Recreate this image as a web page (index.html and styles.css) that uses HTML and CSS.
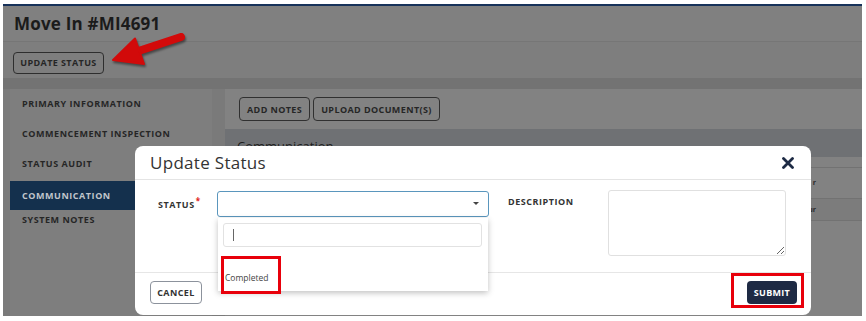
FILE: index.html
```html
<!DOCTYPE html>
<html lang="en">
<head>
    <meta charset="UTF-8">
    <meta name="viewport" content="width=device-width, initial-scale=1.0">
    <title>Move In #MI4691</title>
    <link rel="stylesheet" href="styles.css">
</head>
<body>
    <div class="top-strip"></div>

    <div class="screen">
        <header class="page-header">
            <h1>Move In #MI4691</h1>
        </header>
        <div class="toolbar">
            <button class="btn-outline">UPDATE STATUS</button>
        </div>
        <div class="sub-band"></div>

        <div class="content">
            <nav class="sidebar">
                <a class="nav-item">PRIMARY INFORMATION</a>
                <a class="nav-item">COMMENCEMENT INSPECTION</a>
                <a class="nav-item">STATUS AUDIT</a>
                <a class="nav-item active">COMMUNICATION</a>
                <a class="nav-item last">SYSTEM NOTES</a>
            </nav>

            <section class="panel">
                <div class="panel-actions">
                    <button class="btn-outline">ADD NOTES</button>
                    <button class="btn-outline">UPLOAD DOCUMENT(S)</button>
                </div>
                <div class="panel-title">Communication</div>
                <div class="rows">
                    <div class="row">r</div>
                    <div class="row alt">ur</div>
                </div>
            </section>
        </div>

        <!-- modal -->
        <div class="modal">
            <div class="modal-header">
                <h2>Update Status</h2>
                <span class="close">
                    <svg width="12" height="12" viewBox="0 0 12 12">
                        <path d="M1.5 1.5 L10.5 10.5 M10.5 1.5 L1.5 10.5" stroke="#1d2a44" stroke-width="2.8" stroke-linecap="round"/>
                    </svg>
                </span>
            </div>
            <div class="modal-body">
                <label class="field-label status-label">STATUS<sup>*</sup></label>
                <div class="select-wrap">
                    <div class="select"><span class="caret"></span></div>
                    <div class="dropdown">
                        <div class="search"><span class="cursor"></span></div>
                        <ul class="options">
                            <li class="option empty"></li>
                            <li class="option">Completed</li>
                        </ul>
                    </div>
                </div>
                <label class="field-label desc-label">DESCRIPTION</label>
                <textarea class="description"></textarea>
            </div>
            <div class="modal-footer">
                <button class="btn-outline btn-cancel">CANCEL</button>
                <button class="btn-submit">SUBMIT</button>
            </div>
        </div>

        <!-- annotations -->
        <svg class="arrow" width="200" height="80" viewBox="3 6 200 80">
            <line x1="137" y1="51.5" x2="181" y2="37" stroke="#d20a0a" stroke-width="8" stroke-linecap="round"/>
            <polygon points="113,60 135,38.5 144,64" fill="#d20a0a" stroke="#d20a0a" stroke-width="2" stroke-linejoin="round"/>
        </svg>
        <div class="mark mark-option"></div>
        <div class="mark mark-submit"></div>
    </div>
</body>
</html>
```

FILE: styles.css
```css
body {
    margin: 0;
    background-color: #ffffff;
    font-family: 'Open Sans', 'Liberation Sans', sans-serif;
}

.top-strip {
    height: 4px;
}

.screen {
    position: relative;
    margin-left: 3px;
    width: 859px;
    height: 310px;
    border-top: 2px solid #17325a;
    background-color: #7a7a7a;
    overflow: hidden;
}

.page-header {
    height: 35px;
    padding-left: 11px;
    background-color: #808080;
    border-bottom: 1px solid #767676;
}

.page-header h1 {
    margin: 0;
    font-size: 17px;
    line-height: 35px;
    font-weight: 700;
    letter-spacing: 0.2px;
    color: #1b1b1b;
}

.toolbar {
    height: 29px;
    padding: 7px 10px 0;
    background-color: #7e7e7e;
}

.btn-outline {
    height: 23px;
    padding: 0 6px;
    border: 1px solid #2e2e2e;
    border-radius: 4px;
    background: transparent;
    font-family: inherit;
    font-size: 9px;
    font-weight: 700;
    letter-spacing: 0.4px;
    color: #262626;
}

.toolbar .btn-outline {
    width: 91px;
    height: 22px;
}

.sub-band {
    height: 11px;
    background-color: #737373;
}

.content {
    display: flex;
    gap: 13px;
    padding-left: 7px;
    height: 227px;
}

.sidebar {
    width: 202px;
    background-color: #7e7e7e;
    display: flex;
    flex-direction: column;
}

.nav-item {
    display: block;
    height: 30px;
    line-height: 30px;
    padding-left: 12px;
    font-size: 9px;
    font-weight: 700;
    letter-spacing: 0.55px;
    color: #262626;
}

.nav-item.active {
    margin-top: 2px;
    height: 29px;
    line-height: 29px;
    background-color: #14304d;
    color: #c0c5cb;
}

.nav-item.last {
    height: 20px;
    line-height: 20px;
}

.panel {
    flex: 1;
    background-color: #828282;
}

.panel-actions {
    display: flex;
    gap: 3px;
    padding: 8px 14px 0;
}

.panel-actions .btn-outline {
    height: 24px;
    padding: 0 7px;
    border-color: #303030;
}

.panel-title {
    margin-top: 8px;
    height: 28px;
    padding-left: 12px;
    line-height: 34px;
    font-size: 13px;
    background-color: #6f7174;
    color: #1e1e1e;
}

.rows {
    margin-top: 10px;
    border-top: 1px solid #727272;
}

.row {
    height: 30px;
    line-height: 30px;
    text-align: right;
    padding-right: 46px;
    font-size: 7px;
    font-weight: 700;
    color: #2a2a2a;
    border-bottom: 1px solid #727272;
}

.row.alt {
    height: 21px;
    line-height: 21px;
    background-color: #7c7c7c;
}

/* modal */
.modal {
    position: absolute;
    left: 132px;
    top: 140px;
    width: 676px;
    height: 169px;
    background-color: #ffffff;
    border-radius: 8px;
}

.modal-header {
    height: 33px;
    display: flex;
    align-items: center;
    justify-content: space-between;
    padding: 0 17px 0 15px;
    border-bottom: 1px solid #e4e4e4;
}

.modal-header h2 {
    margin: 0;
    font-size: 17px;
    font-weight: 400;
    letter-spacing: 0.3px;
    color: #333333;
}

.close {
    display: flex;
}

.modal-body {
    height: 81px;
    display: flex;
    align-items: flex-start;
    padding: 11px 0 0 23px;
    border-bottom: 1px solid #e6e6e6;
}

.field-label {
    font-size: 9px;
    font-weight: 700;
    letter-spacing: 0.55px;
    color: #333333;
    padding-top: 4px;
}

.field-label sup {
    color: #e01b1b;
    font-size: 8px;
    margin-left: 1px;
}

.status-label {
    width: 59px;
}

.desc-label {
    width: 100px;
    margin-left: 19px;
}

.select-wrap {
    position: relative;
}

.select {
    position: relative;
    width: 270px;
    height: 24px;
    border: 1px solid #5a96bd;
    border-radius: 3px;
}

.caret {
    position: absolute;
    right: 9px;
    top: 10px;
    border-left: 3px solid transparent;
    border-right: 3px solid transparent;
    border-top: 3px solid #444;
}

.dropdown {
    position: absolute;
    left: 1px;
    top: 27px;
    width: 270px;
    height: 73px;
    background-color: #ffffff;
    box-shadow: 0 2px 6px rgba(0, 0, 0, 0.25);
    z-index: 2;
}

.search {
    margin: 5px 6px 0 5px;
    height: 22px;
    border: 1px solid #e2e2e2;
    border-radius: 3px;
    display: flex;
    align-items: center;
    padding-left: 9px;
}

.cursor {
    width: 1px;
    height: 12px;
    background-color: #666;
}

.options {
    list-style: none;
    margin: 5px 0 0;
    padding: 0;
}

.option {
    height: 20px;
    line-height: 20px;
    padding-left: 7px;
    font-size: 8.5px;
    color: #444444;
}

.option.empty {
    height: 16px;
}

.description {
    width: 174px;
    height: 62px;
    margin-top: -1px;
    border: 1px solid #e0e0e0;
    border-radius: 3px;
    padding: 1px;
}

.modal-footer {
    display: flex;
    justify-content: space-between;
    padding: 8px 14px 0 15px;
}

.btn-cancel {
    width: 52px;
    height: 23px;
    padding: 0;
    border-color: #8c929c;
    color: #333;
}

.btn-submit {
    width: 50px;
    height: 23px;
    padding: 0;
    border: none;
    border-radius: 4px;
    background-color: #1e2a44;
    color: #ffffff;
    font-family: inherit;
    font-size: 9px;
    font-weight: 700;
    letter-spacing: 0.3px;
}

/* annotations */
.arrow {
    position: absolute;
    left: 0;
    top: 0;
    filter: drop-shadow(1px 2px 1px rgba(0, 0, 0, 0.45));
}

.mark {
    position: absolute;
    border: 3px solid #e8000b;
    z-index: 3;
}

.mark-option {
    left: 218px;
    top: 250px;
    width: 54px;
    height: 32px;
}

.mark-submit {
    left: 728px;
    top: 267px;
    width: 67px;
    height: 29px;
}
```
